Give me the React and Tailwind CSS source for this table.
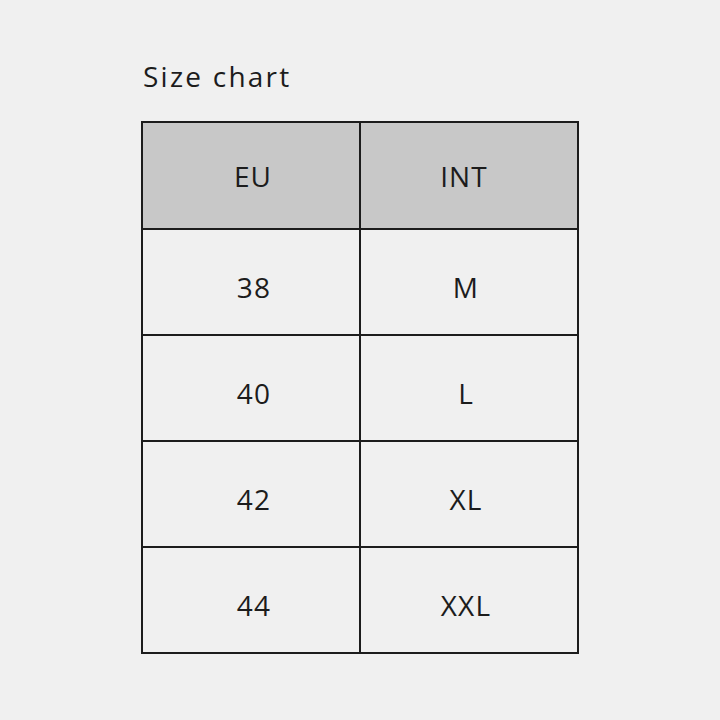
const rows = [
  ['38', 'M'],
  ['40', 'L'],
  ['42', 'XL'],
  ['44', 'XXL'],
];

export default function App() {
  return (
    <div
      className="h-screen w-full bg-[#f0f0f0] text-[#1c1c1c] pl-[141px] pt-[58px] tracking-[0.07em]"
      style={{ fontFamily: '"Open Sans", "Noto Sans", sans-serif' }}
    >
      <h1 className="pl-[2px] text-[28px] leading-[36px] h-[63px] tracking-[0.08em]">Size chart</h1>

      <div className="w-[438px] border-2 border-[#1c1c1c] flex flex-col">
        <div className="flex h-[105px] bg-[#c8c8c8]">
          <div className="w-[216px] flex items-center justify-center text-[28px] pl-[4px]">EU</div>
          <div className="w-[218px] border-l-2 border-[#1c1c1c] flex items-center justify-center text-[28px] pr-[10px]">INT</div>
        </div>
        {rows.map((r, i) => (
          <div key={i} className="flex h-[106px] border-t-2 border-[#1c1c1c]">
            <div className="w-[216px] flex items-center justify-center text-[28px] pt-[9px] pl-[6px]">{r[0]}</div>
            <div className="w-[218px] border-l-2 border-[#1c1c1c] flex items-center justify-center text-[28px] pt-[9px] pr-[6px]">{r[1]}</div>
          </div>
        ))}
      </div>
    </div>
  );
}
